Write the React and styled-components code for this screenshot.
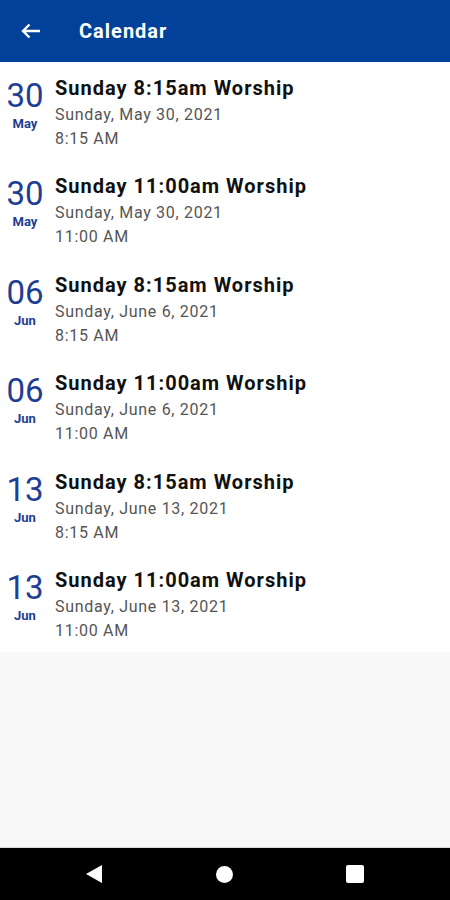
import React from "react";
import styled, { createGlobalStyle } from "styled-components";

const GlobalStyle = createGlobalStyle`
  html, body { margin: 0; padding: 0; }
  body { font-family: Roboto, "Noto Sans", sans-serif; background: #f8f8f8; }
`;

const Screen = styled.div`
  display: flex;
  flex-direction: column;
  width: 450px;
  height: 900px;
  background: #f8f8f8;
`;

const Header = styled.div`
  display: flex;
  align-items: center;
  height: 62px;
  background: #02419a;
  color: #fff;
  flex-shrink: 0;
`;

const BackButton = styled.div`
  display: flex;
  align-items: center;
  justify-content: center;
  width: 62px;
  height: 62px;
`;

const Title = styled.div`
  margin-left: 17px;
  font-size: 20px;
  font-weight: 700;
  letter-spacing: 1px;
`;

const List = styled.div`
  display: flex;
  flex-direction: column;
  background: #fff;
`;

const Row = styled.div`
  display: flex;
  height: 98.4px;
  box-sizing: border-box;
  padding-top: 14px;
`;

const DateCol = styled.div`
  display: flex;
  flex-direction: column;
  align-items: center;
  width: 50px;
  color: #1f3d91;
`;

const Day = styled.div`
  font-size: 33px;
  line-height: 36px;
  margin-top: 2px;
  font-weight: 400;
`;

const Month = styled.div`
  font-size: 13px;
  line-height: 16px;
  font-weight: 700;
  margin-top: 2px;
`;

const Info = styled.div`
  display: flex;
  flex-direction: column;
  margin-left: 5px;
`;

const EventName = styled.div`
  font-size: 20px;
  line-height: 24px;
  font-weight: 700;
  letter-spacing: 1px;
  color: #111;
  margin-bottom: 3px;
`;

const Line = styled.div`
  font-size: 16px;
  line-height: 24px;
  letter-spacing: 0.7px;
  color: #555;
`;

const Filler = styled.div`
  flex: 1;
  background: #f8f8f8;
  border-bottom: 1px solid #d8d8d8;
`;

const NavBar = styled.div`
  display: flex;
  align-items: center;
  justify-content: space-between;
  height: 52px;
  padding: 0 86px;
  background: #000;
  flex-shrink: 0;
`;

const events = [
  { day: "30", mon: "May", name: "Sunday 8:15am Worship", date: "Sunday, May 30, 2021", time: "8:15 AM" },
  { day: "30", mon: "May", name: "Sunday 11:00am Worship", date: "Sunday, May 30, 2021", time: "11:00 AM" },
  { day: "06", mon: "Jun", name: "Sunday 8:15am Worship", date: "Sunday, June 6, 2021", time: "8:15 AM" },
  { day: "06", mon: "Jun", name: "Sunday 11:00am Worship", date: "Sunday, June 6, 2021", time: "11:00 AM" },
  { day: "13", mon: "Jun", name: "Sunday 8:15am Worship", date: "Sunday, June 13, 2021", time: "8:15 AM" },
  { day: "13", mon: "Jun", name: "Sunday 11:00am Worship", date: "Sunday, June 13, 2021", time: "11:00 AM" },
];

function App() {
  return (
    <Screen>
      <GlobalStyle />
      <Header>
        <BackButton>
          <svg width="20" height="16" viewBox="0 0 20 16">
            <path d="M19 8H2.5M8.5 1.5L2 8l6.5 6.5" stroke="#fff" strokeWidth="2.4" fill="none" />
          </svg>
        </BackButton>
        <Title>Calendar</Title>
      </Header>
      <List>
        {events.map((e, i) => (
          <Row key={i}>
            <DateCol>
              <Day>{e.day}</Day>
              <Month>{e.mon}</Month>
            </DateCol>
            <Info>
              <EventName>{e.name}</EventName>
              <Line>{e.date}</Line>
              <Line>{e.time}</Line>
            </Info>
          </Row>
        ))}
      </List>
      <Filler />
      <NavBar>
        <svg width="16" height="18" viewBox="0 0 16 18">
          <path d="M16 0V18L0 9Z" fill="#fff" />
        </svg>
        <svg width="17" height="17" viewBox="0 0 17 17">
          <circle cx="8.5" cy="8.5" r="8.5" fill="#fff" />
        </svg>
        <svg width="18" height="18" viewBox="0 0 18 18">
          <rect width="18" height="18" rx="2" fill="#fff" />
        </svg>
      </NavBar>
    </Screen>
  );
}

export default App;
